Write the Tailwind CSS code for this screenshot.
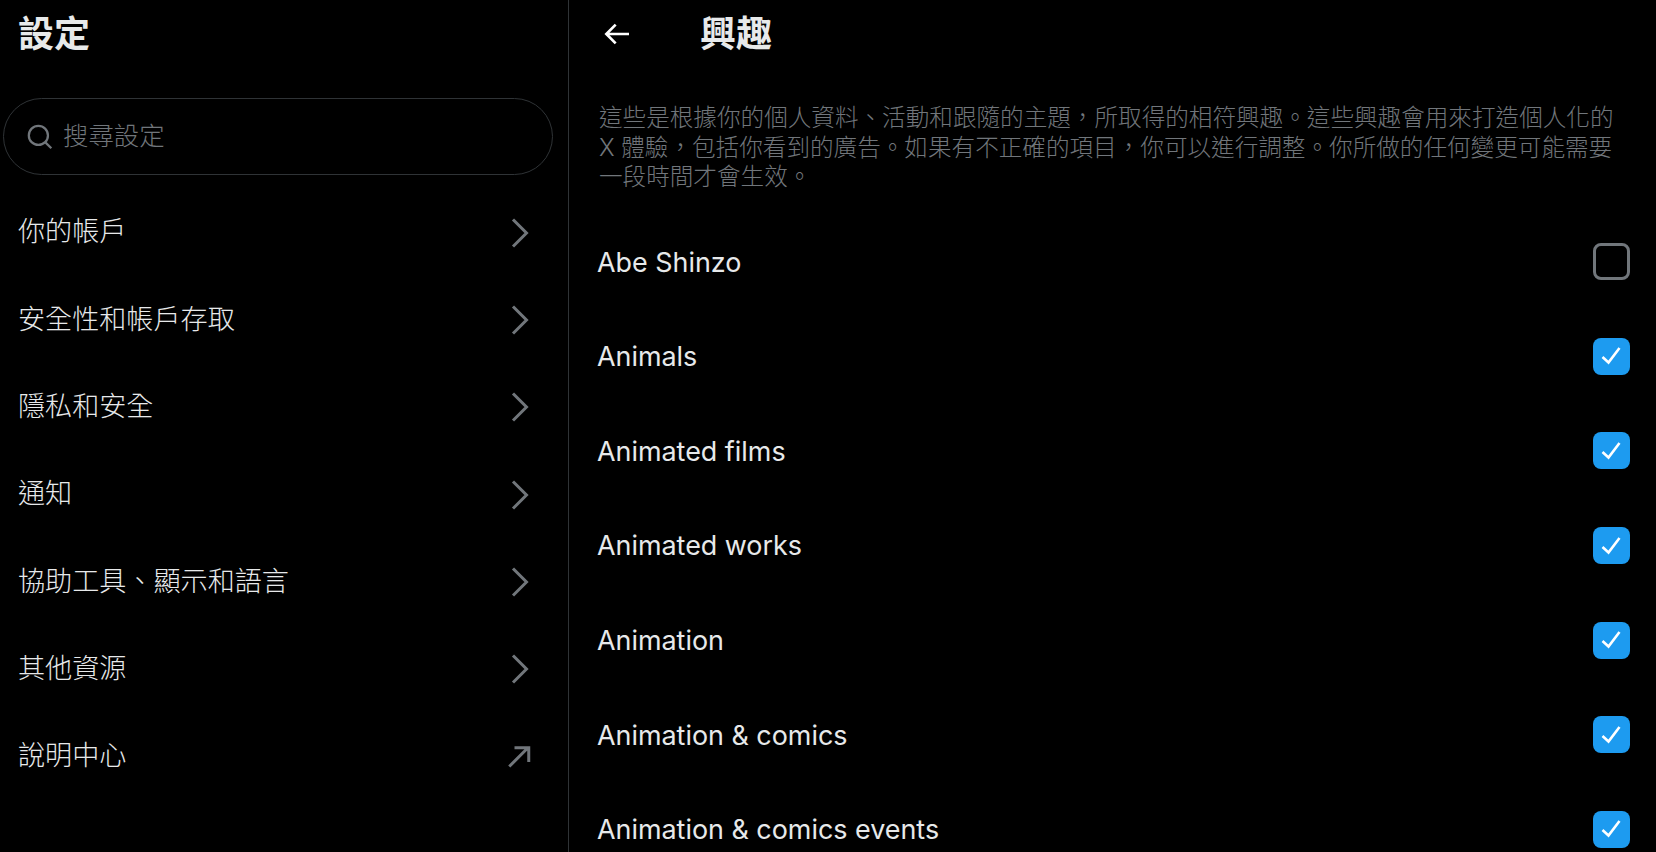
<!DOCTYPE html>
<html lang="zh-Hant">
<head>
    <meta charset="UTF-8">
    <script src="https://cdn.jsdelivr.net/npm/@tailwindcss/browser@4"></script>
    <title>興趣</title>
</head>
<body class="bg-black text-[#e7e9ea] flex w-screen h-screen overflow-hidden font-['Inter','Noto_Sans_CJK_TC',sans-serif]">
    <!-- settings column -->
    <section class="w-[569px] shrink-0 h-full border-r border-[#2f3336]">
        <h1 class="h-[68px] flex items-center px-[18px] text-[36px] font-bold">設定</h1>
        <div class="mt-[30px] ml-[3px] mr-[15px] h-[77px] rounded-full border border-[#2f3336] flex items-center pl-[22px] gap-[10px] text-[25.4px] font-light text-[#71767b]">
            <svg viewBox="0 0 24 24" class="w-[27px] h-[27px] fill-none stroke-[#71767b] stroke-2"><circle cx="11" cy="11" r="8.5"/><path d="M17 17l5.5 5.5"/></svg>
            <span class="-mt-[1px]">搜尋設定</span>
        </div>
        <nav class="mt-[14px] text-[27.1px] font-light">
            <a class="h-[87.3px] flex items-center justify-between pl-[18px] pr-[31px]"><span>你的帳戶</span>
                <svg viewBox="0 0 24 24" class="w-[36px] h-[36px] fill-none stroke-[#71767b] stroke-2"><path d="M8 3l9 9-9 9"/></svg></a>
            <a class="h-[87.3px] flex items-center justify-between pl-[18px] pr-[31px]"><span>安全性和帳戶存取</span>
                <svg viewBox="0 0 24 24" class="w-[36px] h-[36px] fill-none stroke-[#71767b] stroke-2"><path d="M8 3l9 9-9 9"/></svg></a>
            <a class="h-[87.3px] flex items-center justify-between pl-[18px] pr-[31px]"><span>隱私和安全</span>
                <svg viewBox="0 0 24 24" class="w-[36px] h-[36px] fill-none stroke-[#71767b] stroke-2"><path d="M8 3l9 9-9 9"/></svg></a>
            <a class="h-[87.3px] flex items-center justify-between pl-[18px] pr-[31px]"><span>通知</span>
                <svg viewBox="0 0 24 24" class="w-[36px] h-[36px] fill-none stroke-[#71767b] stroke-2"><path d="M8 3l9 9-9 9"/></svg></a>
            <a class="h-[87.3px] flex items-center justify-between pl-[18px] pr-[31px]"><span>協助工具、顯示和語言</span>
                <svg viewBox="0 0 24 24" class="w-[36px] h-[36px] fill-none stroke-[#71767b] stroke-2"><path d="M8 3l9 9-9 9"/></svg></a>
            <a class="h-[87.3px] flex items-center justify-between pl-[18px] pr-[31px]"><span>其他資源</span>
                <svg viewBox="0 0 24 24" class="w-[36px] h-[36px] fill-none stroke-[#71767b] stroke-2"><path d="M8 3l9 9-9 9"/></svg></a>
            <a class="h-[87.3px] flex items-center justify-between pl-[18px] pr-[31px]"><span>說明中心</span>
                <svg viewBox="0 0 24 24" class="w-[36px] h-[36px] fill-none stroke-[#71767b] stroke-2"><path d="M5.5 19l12.5-12.5M9 6.5h9.5v9.5"/></svg></a>
        </nav>
    </section>

    <!-- interests column -->
    <section class="flex-1 h-full overflow-hidden">
        <div class="h-[68px] flex items-center pl-[32px]">
            <svg viewBox="0 0 24 24" class="w-[32px] h-[32px] fill-none stroke-white stroke-2"><path d="M21 12H4M11 5l-7 7 7 7"/></svg>
            <h2 class="ml-[67px] text-[36px] font-bold">興趣</h2>
        </div>
        <p class="mt-[35px] px-[30px] text-[23.6px] leading-[29.5px] font-light text-[#71767b]">這些是根據你的個人資料、活動和跟隨的主題，所取得的相符興趣。這些興趣會用來打造個人化的 X 體驗，包括你看到的廣告。如果有不正確的項目，你可以進行調整。你所做的任何變更可能需要一段時間才會生效。</p>
        <ul class="mt-[23px] text-[26.9px]">
            <li class="h-[94.6px] flex items-center justify-between pl-[28px] pr-[26px]"><span>Abe Shinzo</span>
                <span class="w-[37px] h-[37px] rounded-[8px] border-[3px] border-[#71767b]"></span></li>
            <li class="h-[94.6px] flex items-center justify-between pl-[28px] pr-[26px]"><span>Animals</span>
                <span class="w-[37px] h-[37px] rounded-[8px] bg-[#1d9bf0] flex items-center justify-center"><svg viewBox="0 0 24 24" class="w-[24px] h-[24px] fill-none stroke-white stroke-[2.6]"><path d="M2.5 13l6 5.5L19.5 4"/></svg></span></li>
            <li class="h-[94.6px] flex items-center justify-between pl-[28px] pr-[26px]"><span>Animated films</span>
                <span class="w-[37px] h-[37px] rounded-[8px] bg-[#1d9bf0] flex items-center justify-center"><svg viewBox="0 0 24 24" class="w-[24px] h-[24px] fill-none stroke-white stroke-[2.6]"><path d="M2.5 13l6 5.5L19.5 4"/></svg></span></li>
            <li class="h-[94.6px] flex items-center justify-between pl-[28px] pr-[26px]"><span>Animated works</span>
                <span class="w-[37px] h-[37px] rounded-[8px] bg-[#1d9bf0] flex items-center justify-center"><svg viewBox="0 0 24 24" class="w-[24px] h-[24px] fill-none stroke-white stroke-[2.6]"><path d="M2.5 13l6 5.5L19.5 4"/></svg></span></li>
            <li class="h-[94.6px] flex items-center justify-between pl-[28px] pr-[26px]"><span>Animation</span>
                <span class="w-[37px] h-[37px] rounded-[8px] bg-[#1d9bf0] flex items-center justify-center"><svg viewBox="0 0 24 24" class="w-[24px] h-[24px] fill-none stroke-white stroke-[2.6]"><path d="M2.5 13l6 5.5L19.5 4"/></svg></span></li>
            <li class="h-[94.6px] flex items-center justify-between pl-[28px] pr-[26px]"><span>Animation &amp; comics</span>
                <span class="w-[37px] h-[37px] rounded-[8px] bg-[#1d9bf0] flex items-center justify-center"><svg viewBox="0 0 24 24" class="w-[24px] h-[24px] fill-none stroke-white stroke-[2.6]"><path d="M2.5 13l6 5.5L19.5 4"/></svg></span></li>
            <li class="h-[94.6px] flex items-center justify-between pl-[28px] pr-[26px]"><span>Animation &amp; comics events</span>
                <span class="w-[37px] h-[37px] rounded-[8px] bg-[#1d9bf0] flex items-center justify-center"><svg viewBox="0 0 24 24" class="w-[24px] h-[24px] fill-none stroke-white stroke-[2.6]"><path d="M2.5 13l6 5.5L19.5 4"/></svg></span></li>
        </ul>
    </section>
</body>
</html>
